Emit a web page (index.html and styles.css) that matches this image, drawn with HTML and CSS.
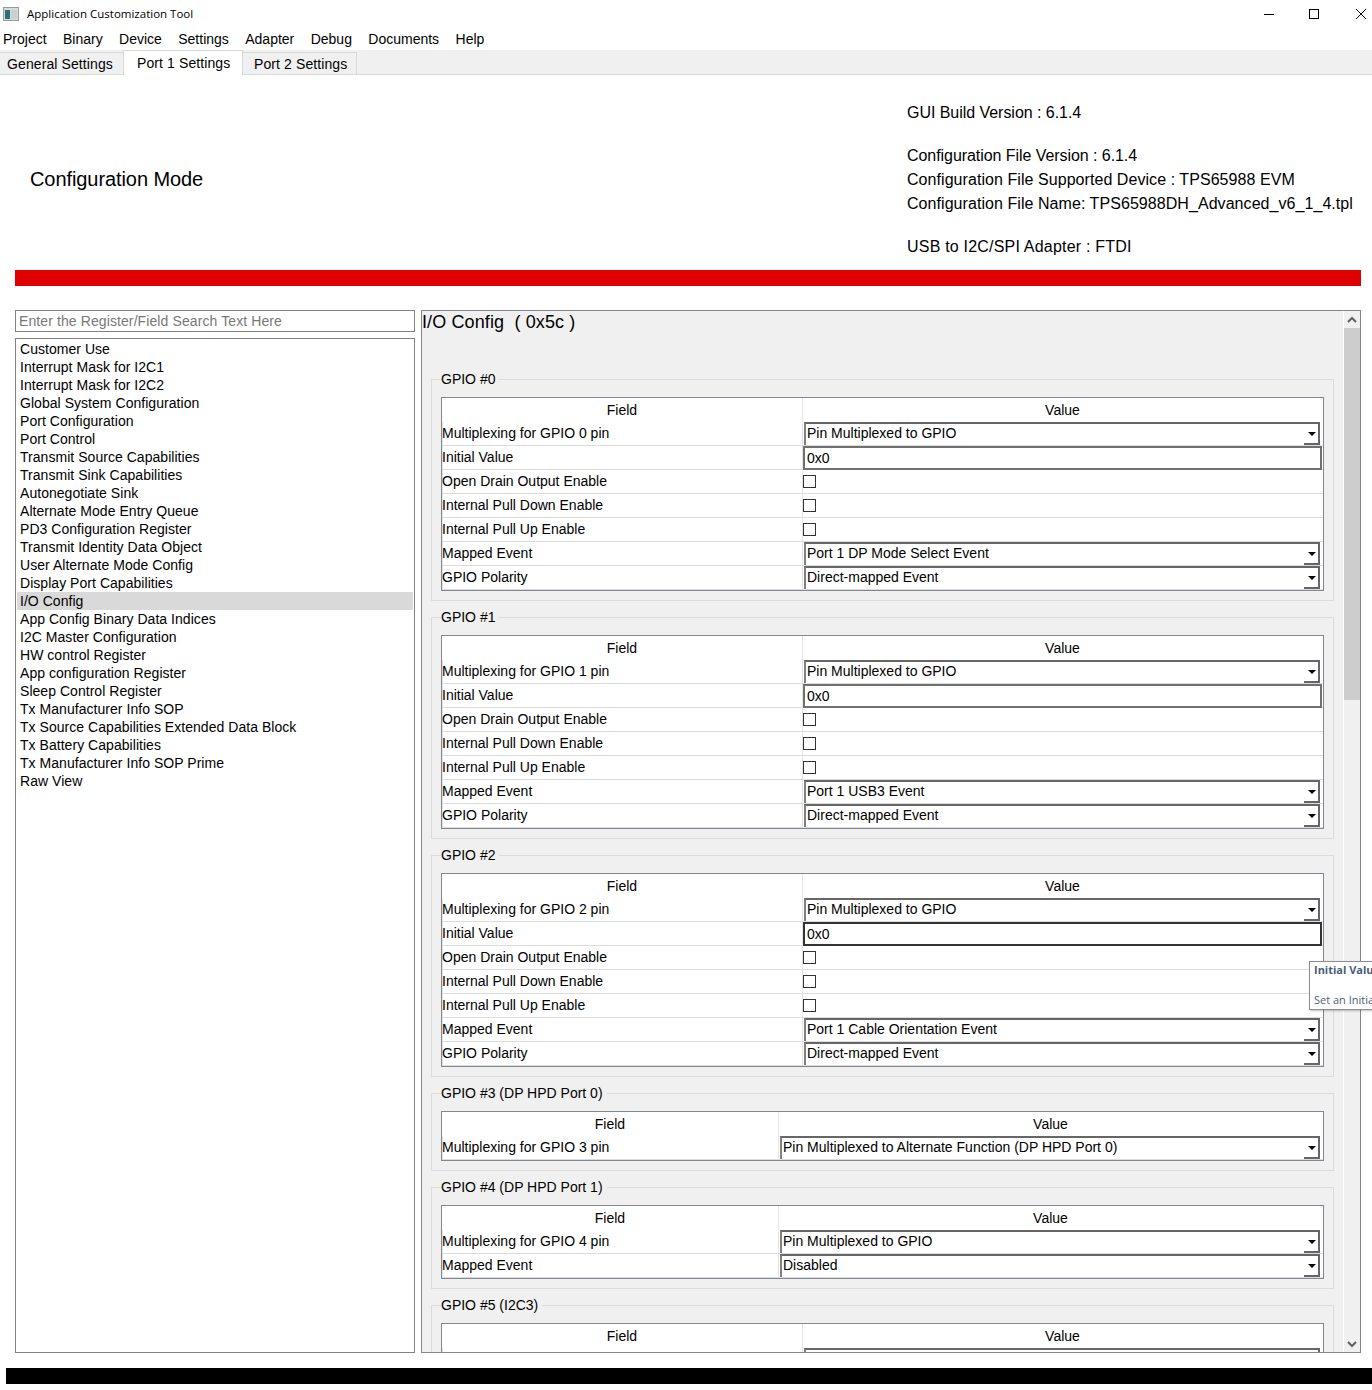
FILE: index.html
```html
<!DOCTYPE html>
<html lang="en">
<head>
<meta charset="utf-8">
<title>Application Customization Tool</title>
<link rel="stylesheet" href="styles.css">
</head>
<body>
<div class="page">
  <div class="titlebar">
    <svg class="appicon" width="16" height="14" viewBox="0 0 16 14"><rect x="0.5" y="0.5" width="15" height="13" fill="#d8dcdc" stroke="#9a9a9a"/><rect x="2" y="3" width="5" height="9" fill="#2f6f7a"/><rect x="8" y="3" width="6" height="9" fill="#c4d4cc"/></svg>
    <span class="apptitle">Application Customization Tool</span>
    <div class="winbtns">
      <svg width="10" height="10" viewBox="0 0 10 10"><path d="M0 5.5H10" stroke="#000"/></svg>
      <svg class="win-max" width="10" height="10" viewBox="0 0 10 10"><rect x="0.5" y="0.5" width="9" height="9" fill="none" stroke="#000"/></svg>
      <svg width="12" height="12" viewBox="0 0 12 12"><path d="M1 1L11 11M11 1L1 11" stroke="#000"/></svg>
    </div>
  </div>
  <nav class="menubar"><span>Project</span><span>Binary</span><span>Device</span><span>Settings</span><span>Adapter</span><span>Debug</span><span>Documents</span><span>Help</span></nav>
  <div class="tabs">
    <div class="tab tab-first">General Settings</div>
    <div class="tab tab-active">Port 1 Settings</div>
    <div class="tab tab-last">Port 2 Settings</div>
  </div>
  <header class="info">
    <h1 class="mode">Configuration Mode</h1>
    <div class="versions">
      <p class="ver-gui">GUI Build Version : 6.1.4</p>
      <div class="block">
        <p class="ver-file">Configuration File Version : 6.1.4</p>
        <p>Configuration File Supported Device : TPS65988 EVM</p>
        <p>Configuration File Name: TPS65988DH_Advanced_v6_1_4.tpl</p>
      </div>
      <p class="ver-usb">USB to I2C/SPI Adapter : FTDI</p>
    </div>
  </header>
  <div class="redbar"></div>
  <main class="main">
    <aside class="side">
      <div class="search">Enter the Register/Field Search Text Here</div>
      <ul class="list">
        <li>Customer Use</li>
        <li>Interrupt Mask for I2C1</li>
        <li>Interrupt Mask for I2C2</li>
        <li>Global System Configuration</li>
        <li>Port Configuration</li>
        <li>Port Control</li>
        <li>Transmit Source Capabilities</li>
        <li>Transmit Sink Capabilities</li>
        <li>Autonegotiate Sink</li>
        <li>Alternate Mode Entry Queue</li>
        <li>PD3 Configuration Register</li>
        <li>Transmit Identity Data Object</li>
        <li>User Alternate Mode Config</li>
        <li>Display Port Capabilities</li>
        <li class="selected">I/O Config</li>
        <li>App Config Binary Data Indices</li>
        <li>I2C Master Configuration</li>
        <li>HW control Register</li>
        <li>App configuration Register</li>
        <li>Sleep Control Register</li>
        <li>Tx Manufacturer Info SOP</li>
        <li>Tx Source Capabilities Extended Data Block</li>
        <li>Tx Battery Capabilities</li>
        <li>Tx Manufacturer Info SOP Prime</li>
        <li>Raw View</li>
      </ul>
    </aside>
    <section class="panel">
      <div class="scrollarea">
        <h2 class="regtitle">I/O Config&nbsp; ( 0x5c )</h2>

        <fieldset class="group">
          <legend>GPIO #0</legend>
          <div class="tbl">
            <div class="row head"><div class="f">Field</div><div class="v">Value</div></div>
            <div class="row"><div class="f">Multiplexing for GPIO 0 pin</div><div class="v"><div class="combo">Pin Multiplexed to GPIO<span class="arrow"></span></div></div></div>
            <div class="row"><div class="f">Initial Value</div><div class="v"><div class="field">0x0</div></div></div>
            <div class="row"><div class="f">Open Drain Output Enable</div><div class="v"><span class="check"></span></div></div>
            <div class="row"><div class="f">Internal Pull Down Enable</div><div class="v"><span class="check"></span></div></div>
            <div class="row"><div class="f">Internal Pull Up Enable</div><div class="v"><span class="check"></span></div></div>
            <div class="row"><div class="f">Mapped Event</div><div class="v"><div class="combo">Port 1 DP Mode Select Event<span class="arrow"></span></div></div></div>
            <div class="row"><div class="f">GPIO Polarity</div><div class="v"><div class="combo">Direct-mapped Event<span class="arrow"></span></div></div></div>
          </div>
        </fieldset>

        <fieldset class="group">
          <legend>GPIO #1</legend>
          <div class="tbl">
            <div class="row head"><div class="f">Field</div><div class="v">Value</div></div>
            <div class="row"><div class="f">Multiplexing for GPIO 1 pin</div><div class="v"><div class="combo">Pin Multiplexed to GPIO<span class="arrow"></span></div></div></div>
            <div class="row"><div class="f">Initial Value</div><div class="v"><div class="field">0x0</div></div></div>
            <div class="row"><div class="f">Open Drain Output Enable</div><div class="v"><span class="check"></span></div></div>
            <div class="row"><div class="f">Internal Pull Down Enable</div><div class="v"><span class="check"></span></div></div>
            <div class="row"><div class="f">Internal Pull Up Enable</div><div class="v"><span class="check"></span></div></div>
            <div class="row"><div class="f">Mapped Event</div><div class="v"><div class="combo">Port 1 USB3 Event<span class="arrow"></span></div></div></div>
            <div class="row"><div class="f">GPIO Polarity</div><div class="v"><div class="combo">Direct-mapped Event<span class="arrow"></span></div></div></div>
          </div>
        </fieldset>

        <fieldset class="group">
          <legend>GPIO #2</legend>
          <div class="tbl">
            <div class="row head"><div class="f">Field</div><div class="v">Value</div></div>
            <div class="row"><div class="f">Multiplexing for GPIO 2 pin</div><div class="v"><div class="combo">Pin Multiplexed to GPIO<span class="arrow"></span></div></div></div>
            <div class="row"><div class="f">Initial Value</div><div class="v"><div class="field field-focus">0x0</div></div></div>
            <div class="row"><div class="f">Open Drain Output Enable</div><div class="v"><span class="check"></span></div></div>
            <div class="row"><div class="f">Internal Pull Down Enable</div><div class="v"><span class="check"></span></div></div>
            <div class="row"><div class="f">Internal Pull Up Enable</div><div class="v"><span class="check"></span></div></div>
            <div class="row"><div class="f">Mapped Event</div><div class="v"><div class="combo">Port 1 Cable Orientation Event<span class="arrow"></span></div></div></div>
            <div class="row"><div class="f">GPIO Polarity</div><div class="v"><div class="combo">Direct-mapped Event<span class="arrow"></span></div></div></div>
          </div>
        </fieldset>

        <fieldset class="group">
          <legend>GPIO #3 (DP HPD Port 0)</legend>
          <div class="tbl tbl-narrow">
            <div class="row head"><div class="f">Field</div><div class="v">Value</div></div>
            <div class="row"><div class="f">Multiplexing for GPIO 3 pin</div><div class="v"><div class="combo">Pin Multiplexed to Alternate Function (DP HPD Port 0)<span class="arrow"></span></div></div></div>
          </div>
        </fieldset>

        <fieldset class="group">
          <legend>GPIO #4 (DP HPD Port 1)</legend>
          <div class="tbl tbl-narrow">
            <div class="row head"><div class="f">Field</div><div class="v">Value</div></div>
            <div class="row"><div class="f">Multiplexing for GPIO 4 pin</div><div class="v"><div class="combo">Pin Multiplexed to GPIO<span class="arrow"></span></div></div></div>
            <div class="row"><div class="f">Mapped Event</div><div class="v"><div class="combo">Disabled<span class="arrow"></span></div></div></div>
          </div>
        </fieldset>

        <fieldset class="group">
          <legend>GPIO #5 (I2C3)</legend>
          <div class="tbl">
            <div class="row head"><div class="f">Field</div><div class="v">Value</div></div>
            <div class="row"><div class="f"></div><div class="v"><div class="combo"><span class="arrow"></span></div></div></div>
          </div>
        </fieldset>
      </div>
      <div class="scrollbar">
        <div class="sb-btn"><svg width="10" height="8" viewBox="0 0 10 8"><path d="M1 6L5 2L9 6" fill="none" stroke="#606060" stroke-width="2"/></svg></div>
        <div class="sb-thumb"></div>
        <div class="sb-track"></div>
        <div class="sb-btn"><svg width="10" height="8" viewBox="0 0 10 8"><path d="M1 2L5 6L9 2" fill="none" stroke="#606060" stroke-width="2"/></svg></div>
      </div>
    </section>
  </main>
  <div class="blackbar"></div>
  <div class="tooltip">
    <div class="tip-title">Initial Value</div>
    <div class="tip-body">Set an Initial value</div>
  </div>
</div>
</body>
</html>
```
FILE: styles.css
```css
* { box-sizing: border-box; }
html, body { margin: 0; padding: 0; background: #fff; }
body { font-family: "Liberation Sans", Arial, sans-serif; font-size: 14px; color: #000; }
.page { position: relative; width: 1372px; height: 1390px; overflow: hidden; }

.titlebar { display: flex; align-items: center; height: 27px; padding-left: 3px; }
.appicon { margin-right: 8px; }
.apptitle { font-family: "Open Sans", sans-serif; font-size: 11.5px; color: #000; }
.winbtns { margin-left: auto; display: flex; align-items: center; gap: 35px; padding-right: 5px; }
.win-max { margin-right: 1px; }

.menubar { display: flex; gap: 16.4px; height: 23px; align-items: center; padding-left: 3px; }

.tabs { display: flex; align-items: flex-end; height: 25px; background: #f0f0f0; border-bottom: 1px solid #d9d9d9; }
.tab { height: 22px; line-height: 23px; background: #f0f0f0; border: 1px solid #d9d9d9; border-bottom: 0; letter-spacing: .1px; }
.tab-first { width: 123px; padding-left: 7px; border-left: 0; border-right: 0; }
.tab-active { width: 120px; height: 25px; margin-bottom: -1px; padding-left: 13px; line-height: 25px; background: #fff; }
.tab-last { width: 114px; padding-left: 11px; border-left: 0; }

.info { display: flex; align-items: center; justify-content: space-between; height: 195px; padding: 13px 0 0 30px; }
.mode { margin: 0; font-size: 20px; font-weight: 400; line-height: 24px; letter-spacing: -.08px; }
.versions { display: flex; flex-direction: column; gap: 19px; width: 465px; margin-top: 2px; font-size: 16px; line-height: 24px; }
.versions p { margin: 0; white-space: nowrap; }
.block { letter-spacing: .06px; }
.block .ver-file { letter-spacing: -.06px; }
.ver-gui { letter-spacing: -.04px; }
.ver-usb { letter-spacing: .2px; }

.redbar { height: 16px; margin: 0 11px 0 15px; background: #e00000; }

.main { display: flex; gap: 6px; height: 1043px; margin: 24px 11px 0 15px; }
.side { display: flex; flex-direction: column; gap: 6px; width: 400px; }
.search { height: 22px; padding-left: 3px; line-height: 20px; color: #787878; border: 1px solid #828282; letter-spacing: .1px; }
.list { flex: 1; margin: 0; padding: 1px; list-style: none; border: 1px solid #828282; letter-spacing: .04px; }
.list li { height: 18px; padding-left: 3px; line-height: 18px; white-space: nowrap; }
.list .selected { background: #d9d9d9; }

.panel { display: flex; flex: 1; background: #f0f0f0; border: 1px solid #828790; overflow: hidden; }
.scrollarea { flex: 1; min-width: 0; overflow: hidden; border-right: 1px solid #fff; }
.regtitle { margin: 0; height: 60px; font-size: 18px; font-weight: 400; line-height: 22px; letter-spacing: .12px; white-space: nowrap; }

.group { margin: 0 9px 8px; padding: 10px 9px 9px; border: 1px solid #dcdcdc; min-width: 0; }
.group legend { padding: 0 4px 0 0; height: 16px; line-height: 16px; }

.tbl { background: #fff; border: 1px solid #828790; }
.row { display: grid; grid-template-columns: 361px 1fr; height: 24px; border-bottom: 1px solid #dcdcdc; box-shadow: inset 1px 0 0 #e4e4e4; }
.tbl-narrow .row { grid-template-columns: 337px 1fr; }
.head { border-bottom: 0; box-shadow: none; }
.head .f, .head .v { justify-content: center; text-align: center; line-height: 24px; }
.head .v { padding-right: 1px; }
.f { padding: 0; line-height: 23px; border-right: 1px solid #e4e4e4; white-space: nowrap; }
.v { min-width: 0; display: flex; align-items: flex-start; }

.combo { position: relative; flex: 1; height: 23px; margin: 0 3px 0 1px; padding-left: 1px; line-height: 19px; background: #fff; border-top: 2px solid #666; border-left: 2px solid #808080; white-space: nowrap; }
.arrow { position: absolute; right: 0; bottom: 0; width: 16px; height: 21px; border-right: 2px solid #666; border-bottom: 2px solid #666; }
.arrow::after { content: ""; position: absolute; right: 2px; bottom: 7px; border-style: solid; border-width: 4px 4px 0; border-color: #000 transparent transparent; }

.field { flex: 1; height: 24px; margin-right: 1px; padding-left: 2px; line-height: 20px; background: #fff; border: 2px solid #707070; }
.field-focus { border-color: #333; }

.check { width: 13px; height: 13px; margin-top: 5px; background: #fff; border: 1px solid #333; }

.scrollbar { display: flex; flex-direction: column; width: 16px; background: #f0f0f0; }
.sb-btn { display: flex; align-items: center; justify-content: center; height: 17px; flex: none; }
.sb-thumb { height: 372px; background: #cdcdcd; }
.sb-track { flex: 1; }

.blackbar { height: 16px; margin: 15px 0 0 6px; background: #000; }

.tooltip { position: absolute; left: 1309px; top: 961px; width: 90px; height: 49px; padding: 0 0 0 4px; font-family: "Open Sans", sans-serif; font-size: 11px; color: #4c607a; background: #fff; border: 1px solid #8c8c8c; box-shadow: 1px 1px 2px rgba(0,0,0,.25); white-space: nowrap; overflow: hidden; }
.tip-title { font-weight: 700; line-height: 16px; }
.tip-body { margin-top: 14px; line-height: 16px; }
```
